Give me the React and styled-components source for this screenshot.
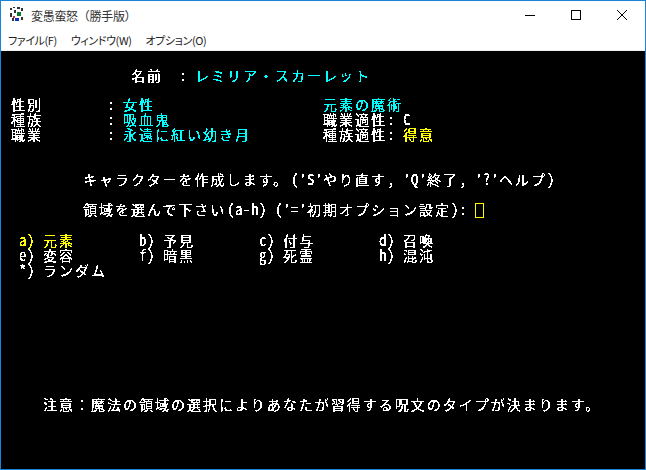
import React from 'react'
import styled, { createGlobalStyle } from 'styled-components'

const Global = createGlobalStyle`
  html, body { margin: 0; padding: 0; background: #fff; }
  #root { width: 646px; height: 470px; }
`

const Win = styled.div`
  box-sizing: border-box;
  width: 646px;
  height: 470px;
  border: 1px solid #1883d7;
  display: flex;
  flex-direction: column;
  background: #fff;
  overflow: hidden;
`

const TitleBar = styled.div`
  box-sizing: border-box;
  height: 29px;
  flex: none;
  display: flex;
  align-items: center;
  padding: 0 0 1px 8px;
  font: 12px "Noto Sans CJK JP", sans-serif;
  letter-spacing: -0.3px;
  color: #333;
`

const AppIcon = styled.svg`
  width: 16px;
  height: 16px;
  margin: 0 6px 2px 0;
`

const Title = styled.span`
  flex: 1;
`

const WinButton = styled.div`
  width: 46px;
  height: 28px;
  display: flex;
  align-items: center;
  justify-content: center;
  svg { width: 10px; height: 10px; }
`

const MenuBar = styled.div`
  height: 20px;
  flex: none;
  display: flex;
  align-items: center;
  padding-left: 7px;
  gap: 14px;
  font: 11px "Noto Sans CJK JP", sans-serif;
  font-feature-settings: "palt";
  letter-spacing: -0.4px;
  color: #222;
  border-bottom: 1px solid #f0f0f0;
`

const Screen = styled.div`
  flex: 1;
  background: #000;
  padding: 16px 0 0 2px;
  filter: url(#crisp);
  display: flex;
  flex-direction: column;
`

const Line = styled.div`
  height: 15px;
  line-height: 15px;
  white-space: pre;
  margin-top: ${p => p.$gap || 0}px;
  padding-left: ${p => (p.$col || 0) * 8}px;
  display: flex;
  align-items: baseline;
`

const Run = styled.span`
  color: ${p => p.$color || '#fff'};
  font-family: "Noto Sans CJK JP", monospace;
  font-size: ${p => p.$wide ? '14px' : '15px'};
  font-feature-settings: ${p => p.$wide ? 'normal' : '"hwid"'};
  letter-spacing: ${p => p.$wide ? '2px' : '0.5px'};
  width: ${p => p.$cols * 8}px;
  flex: none;
`

const Cursor = styled.span`
  box-sizing: border-box;
  width: 9px;
  height: 15px;
  flex: none;
  align-self: flex-start;
  margin-top: 2px;
  border: 1px solid #ff0;
`

const CYAN = '#0ff'
const YELLOW = '#ff0'

function isWide(c) {
  return c.charCodeAt(0) > 0xff
}

// split a string into same-width runs so it keeps the 8px terminal grid
function Text({ children, color }) {
  const runs = []
  for (const c of children) {
    const wide = isWide(c)
    const last = runs[runs.length - 1]
    if (last && last.wide === wide) last.text += c
    else runs.push({ wide, text: c })
  }
  return runs.map((r, i) => (
    <Run key={i} $wide={r.wide} $color={color} $cols={r.text.length * (r.wide ? 2 : 1)}>{r.text}</Run>
  ))
}

const pad = n => ' '.repeat(n)

export default function App() {
  return (
    <Win>
      <Global />
      <svg width="0" height="0" style={{ position: 'absolute' }}>
        <filter id="crisp" colorInterpolationFilters="sRGB">
          <feComponentTransfer>
            <feFuncR type="discrete" tableValues="0 1 1" />
            <feFuncG type="discrete" tableValues="0 1 1" />
            <feFuncB type="discrete" tableValues="0 1 1" />
          </feComponentTransfer>
        </filter>
      </svg>
      <TitleBar>
        <AppIcon viewBox="0 0 16 16" shapeRendering="crispEdges">
          <path d="M1 2h2v2H1zM4 1h2v1H4zM5 4h2v3H5zM8 1h3v2H8zM12 2h2v3h-2zM1 7h2v4H1zM3 12h2v3H3zM12 11h2v3h-2z" fill="#333" />
          <path d="M8 6h4v4H8z" fill="#0a7a2a" />
          <path d="M6 12h4v3H6z" fill="#1030c0" />
          <path d="M4 10h2v2H4z" fill="#c03030" />
        </AppIcon>
        <Title>変愚蛮怒（勝手版）</Title>
        <WinButton>
          <svg viewBox="0 0 10 10"><path d="M0 5.5h10" stroke="#000" fill="none" /></svg>
        </WinButton>
        <WinButton>
          <svg viewBox="0 0 10 10"><rect x=".5" y=".5" width="9" height="9" stroke="#000" fill="none" /></svg>
        </WinButton>
        <WinButton>
          <svg viewBox="0 0 10 10"><path d="M0 0l10 10M10 0L0 10" stroke="#000" fill="none" /></svg>
        </WinButton>
      </TitleBar>
      <MenuBar>
        <span>ファイル(F)</span>
        <span>ウィンドウ(W)</span>
        <span>オプション(O)</span>
      </MenuBar>
      <Screen>
        <Line $col={16}>
          <Text>{'名前  : '}</Text>
          <Text color={CYAN}>レミリア・スカーレット</Text>
        </Line>
        <Line $col={1} $gap={14}>
          <Text>{'性別' + pad(8) + ': '}</Text>
          <Text color={CYAN}>女性</Text>
          <Text>{pad(21)}</Text>
          <Text color={CYAN}>元素の魔術</Text>
        </Line>
        <Line $col={1}>
          <Text>{'種族' + pad(8) + ': '}</Text>
          <Text color={CYAN}>吸血鬼</Text>
          <Text>{pad(19)}</Text>
          <Text>職業適性: C</Text>
        </Line>
        <Line $col={1}>
          <Text>{'職業' + pad(8) + ': '}</Text>
          <Text color={CYAN}>永遠に紅い幼き月</Text>
          <Text>{pad(9)}</Text>
          <Text>{'種族適性: '}</Text>
          <Text color={YELLOW}>得意</Text>
        </Line>
        <Line $col={10} $gap={30}>
          <Text>{"キャラクターを作成します。('S'やり直す, 'Q'終了, '?'ヘルプ)"}</Text>
        </Line>
        <Line $col={10} $gap={15}>
          <Text>{"領域を選んで下さい(a-h) ('='初期オプション設定): "}</Text>
          <Cursor />
        </Line>
        <Line $col={2} $gap={16}>
          <Text color={YELLOW}>a) 元素</Text>
          <Text>{pad(8) + 'b) 予見' + pad(8) + 'c) 付与' + pad(8) + 'd) 召喚'}</Text>
        </Line>
        <Line $col={2}>
          <Text>{'e) 変容' + pad(8) + 'f) 暗黒' + pad(8) + 'g) 死霊' + pad(8) + 'h) 混沌'}</Text>
        </Line>
        <Line $col={2}>
          <Text>*) ランダム</Text>
        </Line>
        <Line $col={5} $gap={120}>
          <Text>注意：魔法の領域の選択によりあなたが習得する呪文のタイプが決まります。</Text>
        </Line>
      </Screen>
    </Win>
  )
}
